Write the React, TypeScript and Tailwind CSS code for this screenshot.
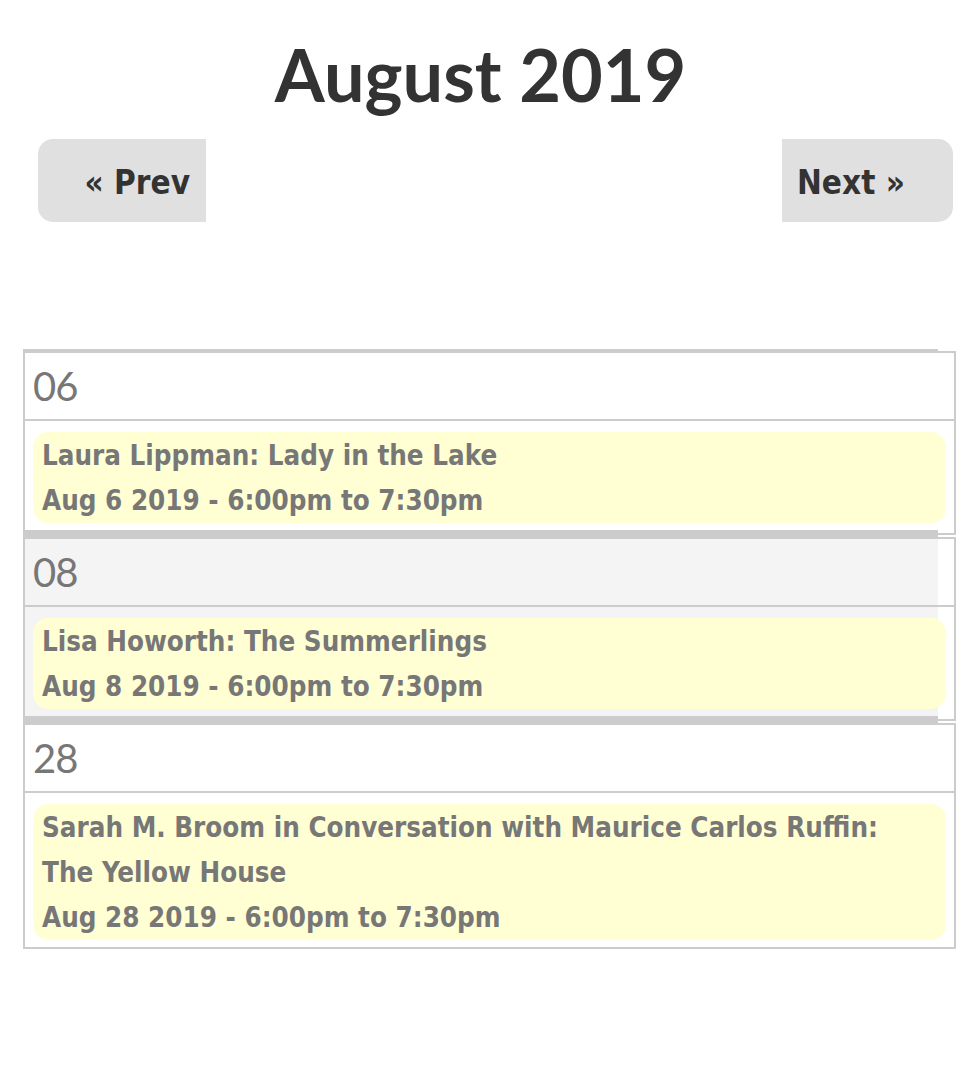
import React from "react";

type CalEvent = {
  title: string[];
  when: string;
};

type Day = {
  day: string;
  shaded: boolean;
  last?: boolean;
  events: CalEvent[];
};

const days: Day[] = [
  {
    day: "06",
    shaded: false,
    events: [
      {
        title: ["Laura Lippman: Lady in the Lake"],
        when: "Aug 6 2019 - 6:00pm to 7:30pm",
      },
    ],
  },
  {
    day: "08",
    shaded: true,
    events: [
      {
        title: ["Lisa Howorth: The Summerlings"],
        when: "Aug 8 2019 - 6:00pm to 7:30pm",
      },
    ],
  },
  {
    day: "28",
    shaded: false,
    last: true,
    events: [
      {
        title: [
          "Sarah M. Broom in Conversation with Maurice Carlos Ruffin:",
          "The Yellow House",
        ],
        when: "Aug 28 2019 - 6:00pm to 7:30pm",
      },
    ],
  },
];

function DayBlock({ day }: { day: Day }) {
  return (
    <div className="w-[933px]">
      {/* top strip */}
      <div className="h-[2px] w-[915px] bg-[#cccccc]" />

      <div className="border-2 border-[#cccccc]">
        {/* date header */}
        <div
          className={
            day.shaded
              ? "flex h-[66px] items-center bg-[linear-gradient(to_right,#f4f4f4_913px,#ffffff_913px)] pl-[8px]"
              : "flex h-[66px] items-center pl-[8px]"
          }
        >
          <span className="text-[40px] leading-none tracking-[-1px] text-[#777777]">
            {day.day}
          </span>
        </div>

        <div className="h-[2px] bg-[#cccccc]" />

        {/* events */}
        <div
          className={
            day.shaded
              ? "bg-[linear-gradient(to_right,#f4f4f4_913px,#ffffff_913px)] px-[8px] pt-[11px] pb-[8px]"
              : "px-[8px] pt-[11px] pb-[8px]"
          }
        >
          {day.events.map((ev) => (
            <div
              key={ev.when}
              className="rounded-[15px] bg-[#ffffd3] px-[9px] pt-[1px] font-['DejaVu_Sans_Condensed','DejaVu_Sans',sans-serif] text-[27.5px] font-bold leading-[45px] text-[#777777]"
            >
              {ev.title.map((line) => (
                <div key={line}>{line}</div>
              ))}
              <div className="-mb-[1px]">{ev.when}</div>
            </div>
          ))}
        </div>

        {!day.last && <div className="h-[3px] w-[913px] bg-[#cccccc]" />}
      </div>
    </div>
  );
}

export default function App() {
  return (
    <div className="min-h-[1091px] bg-white font-['Lato',sans-serif]">
      <h1 className="ml-[23px] w-[915px] pt-[31px] text-center text-[72px] font-bold leading-[1.2] text-[#333333]">
        August 2019
      </h1>

      {/* month navigation */}
      <div className="mt-[22px] ml-[38px] flex w-[915px] justify-between font-['DejaVu_Sans_Condensed','DejaVu_Sans',sans-serif]">
        <button className="flex h-[83px] w-[168px] items-center justify-end rounded-l-[15px] bg-[#e0e0e0] pt-[4px] pr-[16px] text-[33px] font-bold text-[#333333]">
          « Prev
        </button>
        <button className="flex h-[83px] w-[171px] items-center justify-start rounded-r-[15px] bg-[#e0e0e0] pt-[4px] pl-[15px] text-[33px] font-bold text-[#333333]">
          Next »
        </button>
      </div>

      {/* event list */}
      <div className="mt-[127px] ml-[23px]">
        {days.map((d) => (
          <DayBlock key={d.day} day={d} />
        ))}
      </div>
    </div>
  );
}
